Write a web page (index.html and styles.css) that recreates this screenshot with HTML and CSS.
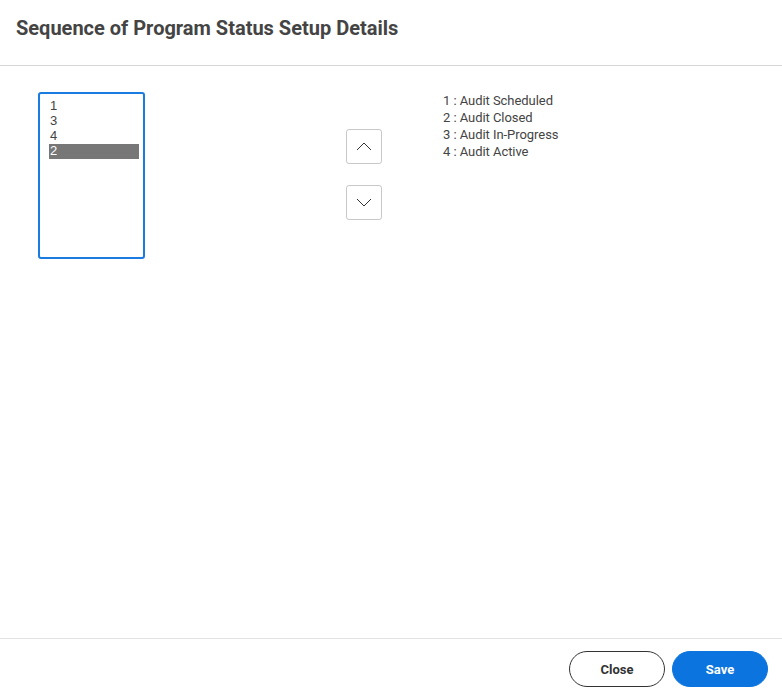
FILE: index.html
```html
<!DOCTYPE html>
<html>
<head>
<meta charset="utf-8">
<link rel="stylesheet" href="styles.css">
</head>
<body>
<div class="dialog">
  <header class="header">
    <h1 class="title">Sequence of Program Status Setup Details</h1>
  </header>
  <main class="content">
    <div class="listbox">
      <div class="item">1</div>
      <div class="item">3</div>
      <div class="item">4</div>
      <div class="item selected">2</div>
    </div>
    <div class="arrows">
      <button class="arrow" aria-label="Move up">
        <svg width="16" height="9" viewBox="0 0 16 9"><path d="M1 8 L8 1 L15 8" fill="none" stroke="#333" stroke-width="1"/></svg>
      </button>
      <button class="arrow" aria-label="Move down">
        <svg width="16" height="9" viewBox="0 0 16 9"><path d="M1 1 L8 8 L15 1" fill="none" stroke="#333" stroke-width="1"/></svg>
      </button>
    </div>
    <div class="legend">
      <div>1 : Audit Scheduled</div>
      <div>2 : Audit Closed</div>
      <div>3 : Audit In-Progress</div>
      <div>4 : Audit Active</div>
    </div>
  </main>
  <footer class="footer">
    <button class="btn btn-close">Close</button>
    <button class="btn btn-save">Save</button>
  </footer>
</div>
</body>
</html>
```

FILE: styles.css
```css
* { box-sizing: border-box; }
html, body { margin: 0; padding: 0; background: #fff; }
body { font-family: Roboto, "Liberation Sans", Arial, sans-serif; color: #444; }
.dialog { width: 782px; height: 695px; display: flex; flex-direction: column; }
.header { height: 66px; border-bottom: 1px solid #d6d6d6; padding: 16px 16px 0; }
.title { margin: 0; font-size: 20px; font-weight: 700; color: #444; line-height: 24px; letter-spacing: 0; }
.content { flex: 1; display: flex; align-items: flex-start; padding: 26px 0 0 38px; }
.listbox { width: 107px; height: 167px; border: 2px solid #1a7be0; border-radius: 3px; padding: 5px 4px 0 9px; font-family: "Liberation Sans", Arial, sans-serif; font-size: 13px; color: #444; }
.item { height: 15px; line-height: 14px; padding-left: 1px; }
.item.selected { background: #777; color: #fff; }
.arrows { display: flex; flex-direction: column; gap: 21px; margin-left: 201px; margin-top: 37px; }
.arrow { width: 36px; height: 35px; border: 1px solid #c8c8c8; border-radius: 3px; background: #fff; padding: 0; display: flex; align-items: center; justify-content: center; }
.legend { margin-left: 61px; font-size: 13px; line-height: 17px; color: #444; letter-spacing: -0.05px; }
.footer { height: 57px; border-top: 1px solid #e2e2e2; display: flex; justify-content: flex-end; align-items: flex-start; gap: 7px; padding: 12px 14px 0 0; }
.btn { width: 96px; height: 36px; border-radius: 18px; font-family: Roboto, "Liberation Sans", sans-serif; font-size: 13px; font-weight: 700; cursor: pointer; }
.btn-close { background: #fff; border: 1px solid #333; color: #333; }
.btn-save { background: #0b74de; border: 1px solid #0b74de; color: #fff; }
```
